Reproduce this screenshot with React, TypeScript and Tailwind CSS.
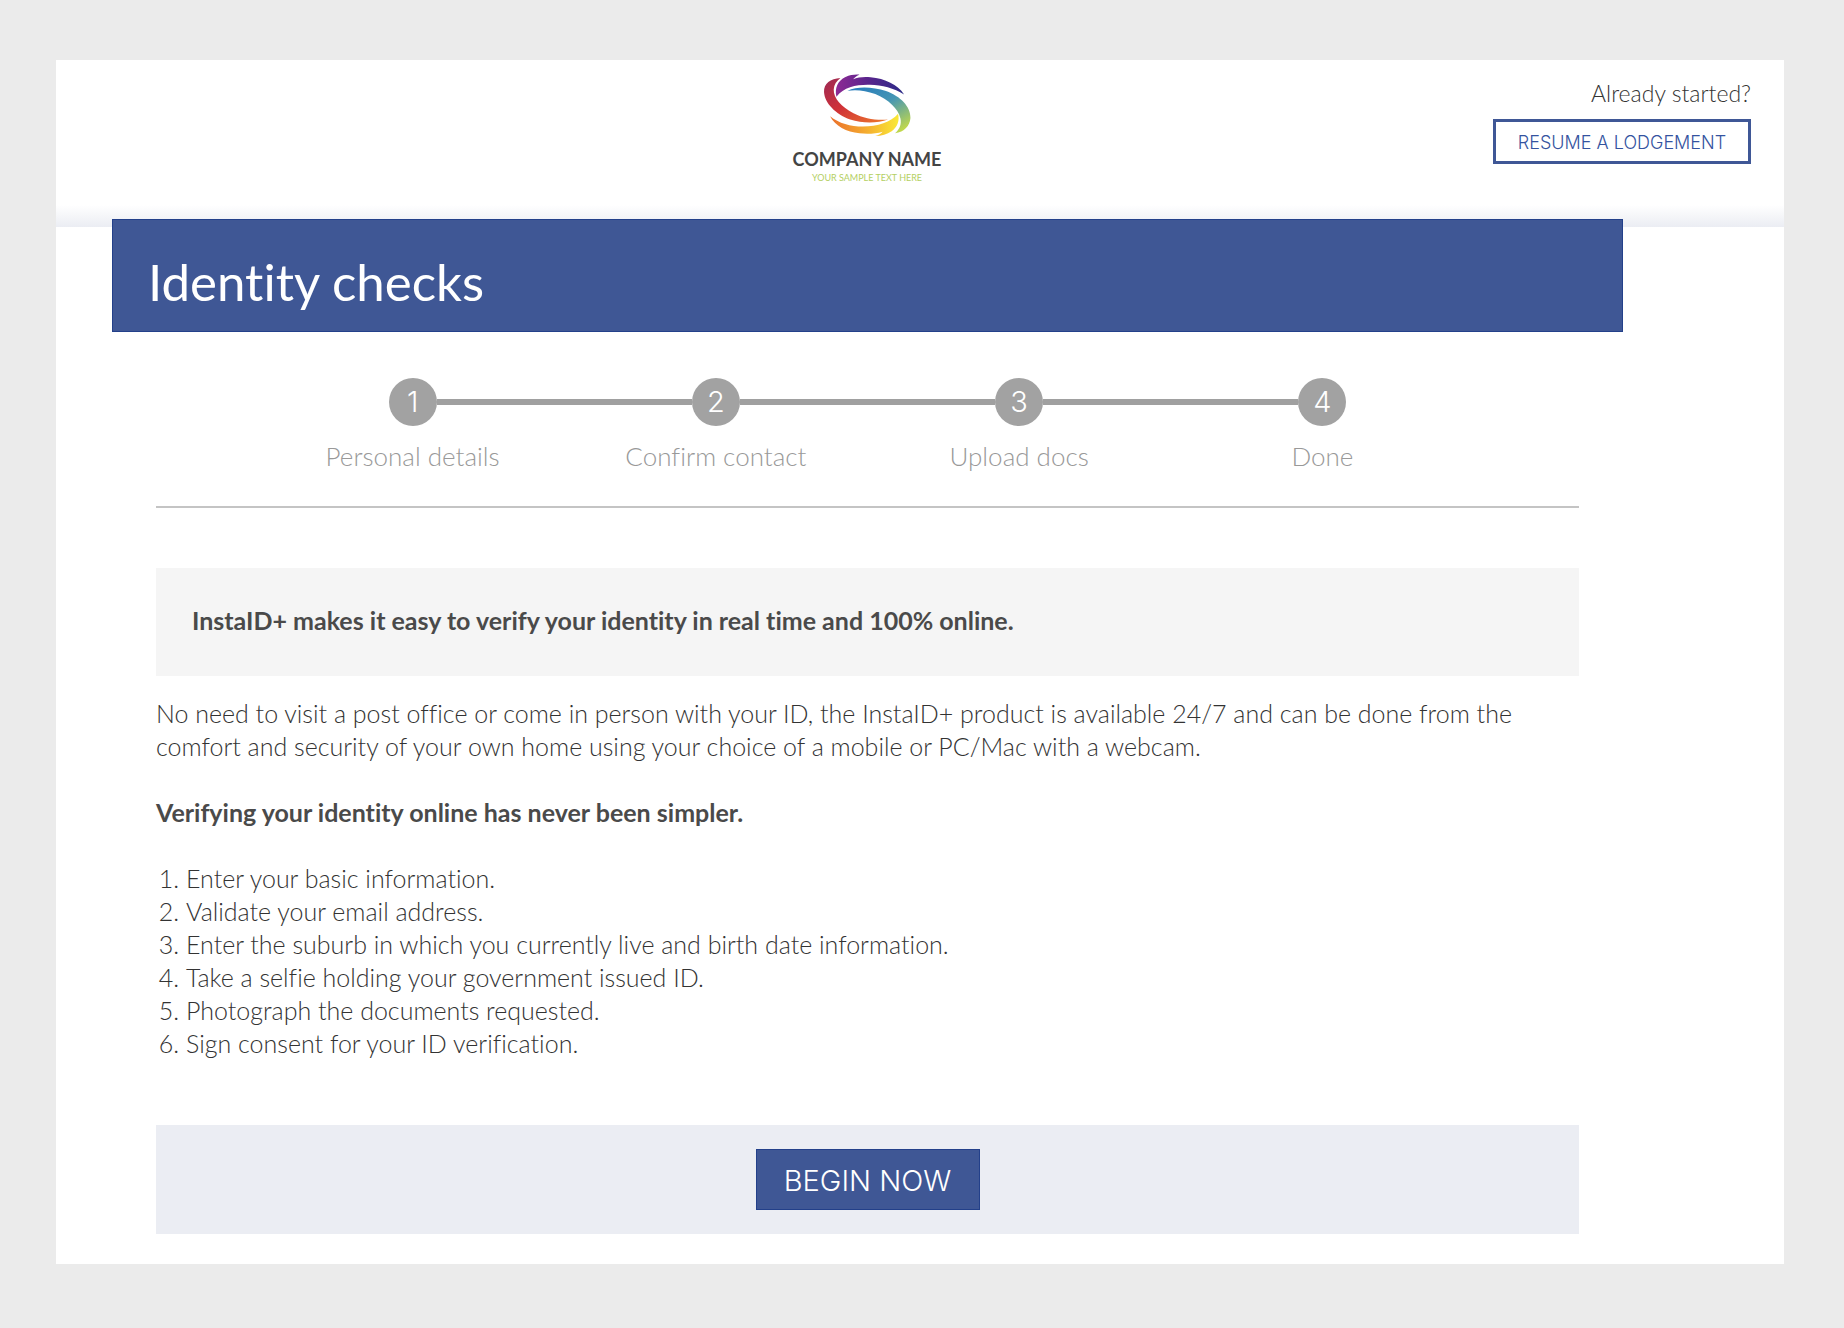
import { clsx } from "clsx"

const steps = ["Personal details", "Confirm contact", "Upload docs", "Done"]

const instructions = [
	"Enter your basic information.",
	"Validate your email address.",
	"Enter the suburb in which you currently live and birth date information.",
	"Take a selfie holding your government issued ID.",
	"Photograph the documents requested.",
	"Sign consent for your ID verification.",
]

const LogoMark = ({ className }: { className?: string }) => {
	return (
		<svg viewBox="150 50 280 200" className={className} aria-hidden="true">
			<defs>
				<linearGradient id="red" x1="0" y1="0" x2="1" y2="1">
					<stop offset="0" stopColor="#9c2a55" />
					<stop offset="0.45" stopColor="#cf3038" />
					<stop offset="1" stopColor="#ee7a2c" />
				</linearGradient>
				<linearGradient id="purple" x1="0" y1="0" x2="1" y2="0">
					<stop offset="0" stopColor="#8e2a94" />
					<stop offset="0.5" stopColor="#56248c" />
					<stop offset="1" stopColor="#2b2c88" />
				</linearGradient>
				<linearGradient id="blue" x1="0" y1="0" x2="0.8" y2="1">
					<stop offset="0" stopColor="#2479bd" />
					<stop offset="0.5" stopColor="#4596b4" />
					<stop offset="1" stopColor="#c3d94a" />
				</linearGradient>
				<linearGradient id="yellow" x1="0" y1="0" x2="1" y2="0">
					<stop offset="0" stopColor="#ea6f2c" />
					<stop offset="0.5" stopColor="#f4a92f" />
					<stop offset="1" stopColor="#f9e936" />
				</linearGradient>
			</defs>
			<path
				fill="url(#red)"
				d="M211 68C181 70 161 84 162 110C164 143 196 176 240 192C278 204 322 203 353 192C318 195 281 189 250 173C214 154 190 128 191 102C192 88 199 77 211 68Z"
			/>
			<path
				fill="url(#purple)"
				d="M199 124C193 98 203 76 226 65C240 59 253 57 268 58C260 61 253 66 249 72C263 66 281 64 301 66C344 70 382 88 401 117C371 98 335 89 299 88C260 87 222 94 199 124Z"
			/>
			<path
				fill="url(#blue)"
				d="M232 106C262 92 307 94 347 107C391 123 421 154 420 187C418 211 402 228 374 233C388 221 394 205 390 188C384 161 354 132 315 116C286 105 258 102 232 106Z"
			/>
			<path
				fill="url(#yellow)"
				d="M180 182C206 203 242 213 278 213C322 213 362 200 383 175C388 195 382 214 364 227C350 236 334 241 315 241C325 238 333 233 337 228C317 234 293 236 268 233C229 229 195 211 180 182Z"
			/>
		</svg>
	)
}

const StepItem = ({ label, index, last }: { label: string; index: number; last: boolean }) => {
	return (
		<li className="flex flex-1 flex-col items-center">
			<div className="flex w-full items-center">
				<span className={clsx("h-1.5 flex-1", index > 0 && "bg-[#a0a0a0]")} />
				<span className="flex size-12 items-center justify-center rounded-full bg-[#a2a2a2] font-['Inter',sans-serif] text-[29px] font-light text-white">
					{index + 1}
				</span>
				<span className={clsx("h-1.5 flex-1", !last && "bg-[#a0a0a0]")} />
			</div>
			<span className="mt-3.5 text-[26px] leading-[33px] text-[#999999]">{label}</span>
		</li>
	)
}

const Header = () => {
	return (
		<header className="flex h-[167px] items-start bg-linear-to-t from-[#ebedf3] to-white to-[22px] pr-[33px] pl-[185px]">
			<div className="flex flex-1 flex-col items-center pt-3">
				<LogoMark className="h-[67px]" />
				<p className="mt-2.5 text-[18px] leading-5 font-bold text-[#444444]">COMPANY NAME</p>
				<p className="mt-[3px] text-[9px] leading-3 font-normal text-[#b4cf62]">YOUR SAMPLE TEXT HERE</p>
			</div>
			<div className="flex w-[258px] flex-col items-end pt-[17px]">
				<p className="text-[23px] leading-[33px]">Already started?</p>
				<button
					type="button"
					className="mt-[9px] h-[45px] w-full border-3 border-[#3f5796] pt-0.5 font-['Inter',sans-serif] text-[18px] font-light text-[#3453a0]"
				>
					RESUME A LODGEMENT
				</button>
			</div>
		</header>
	)
}

export default function App() {
	return (
		<div className="min-h-screen bg-[#ebebeb] px-[60px] pt-[60px] pb-16 pl-14 font-['Lato',sans-serif] font-light text-[#333333] [font-variant-ligatures:none]">
			<div className="bg-white pb-[30px]">
				<Header />

				<main className="mr-[161px] ml-14">
					<h1 className="relative -mt-2 border border-[#23408a] bg-[#3f5795] px-[35px] pt-8 pb-[19px] text-[51px] leading-[60px] font-normal text-white">
						Identity checks
					</h1>

					<div className="px-11">
						<ol className="flex border-b-2 border-[#c4c4c4] px-[105px] pt-[46px] pb-[33px]">
							{steps.map((label, i) => (
								<StepItem key={label} label={label} index={i} last={i === steps.length - 1} />
							))}
						</ol>

						<p className="mt-[60px] bg-[#f5f5f5] px-9 pt-9 pb-[39px] text-[25px] leading-[33px] font-bold text-[#4a4a4a]">
							InstaID+ makes it easy to verify your identity in real time and 100% online.
						</p>

						<div className="mt-[21px] space-y-[33px] text-[25px] leading-[33px]">
							<p>
								No need to visit a post office or come in person with your ID, the InstaID+ product is available 24/7 and
								can be done from the comfort and security of your own home using your choice of a mobile or PC/Mac with a
								webcam.
							</p>
							<p className="font-bold text-[#4a4a4a]">Verifying your identity online has never been simpler.</p>
							<ol className="list-decimal pl-[30px]">
								{instructions.map((text) => (
									<li key={text}>{text}</li>
								))}
							</ol>
						</div>

						<div className="mt-[65px] flex justify-center bg-[#ebedf3] py-6">
							<button
								type="button"
								className="h-[61px] w-[224px] border border-[#23408a] bg-[#3f5795] pt-0.5 font-['Inter',sans-serif] text-[29px] font-light text-white"
							>
								BEGIN NOW
							</button>
						</div>
					</div>
				</main>
			</div>
		</div>
	)
}
